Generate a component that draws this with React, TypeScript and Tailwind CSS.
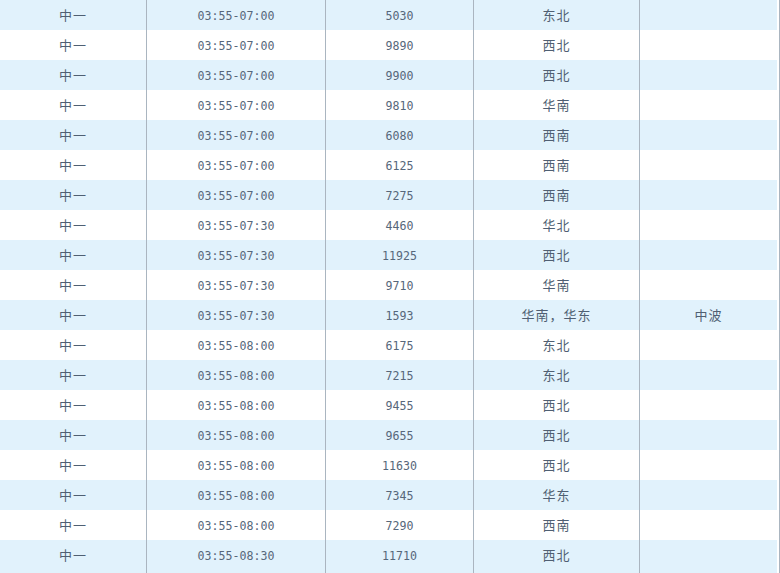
const rows: [string, string, string, string, string][] = [
  ["中一", "03:55-07:00", "5030", "东北", ""],
  ["中一", "03:55-07:00", "9890", "西北", ""],
  ["中一", "03:55-07:00", "9900", "西北", ""],
  ["中一", "03:55-07:00", "9810", "华南", ""],
  ["中一", "03:55-07:00", "6080", "西南", ""],
  ["中一", "03:55-07:00", "6125", "西南", ""],
  ["中一", "03:55-07:00", "7275", "西南", ""],
  ["中一", "03:55-07:30", "4460", "华北", ""],
  ["中一", "03:55-07:30", "11925", "西北", ""],
  ["中一", "03:55-07:30", "9710", "华南", ""],
  ["中一", "03:55-07:30", "1593", "华南，华东", "中波"],
  ["中一", "03:55-08:00", "6175", "东北", ""],
  ["中一", "03:55-08:00", "7215", "东北", ""],
  ["中一", "03:55-08:00", "9455", "西北", ""],
  ["中一", "03:55-08:00", "9655", "西北", ""],
  ["中一", "03:55-08:00", "11630", "西北", ""],
  ["中一", "03:55-08:00", "7345", "华东", ""],
  ["中一", "03:55-08:00", "7290", "西南", ""],
  ["中一", "03:55-08:30", "11710", "西北", ""],
];

// cell text styles
const cjk = "font-['Noto_Sans_CJK_SC',sans-serif] text-[13px] tracking-[1px] leading-[30px] text-center";
const num = "font-['DejaVu_Sans_Mono',monospace] text-[11.6px] leading-[30px] pt-[1px] text-center text-[#56677a]";

export default function App() {
  return (
    <div className="w-[780px] h-[573px] overflow-hidden bg-white text-[#4f5f72]">
      {rows.map((r, i) => {
        const last = i === rows.length - 1;
        const bg = i % 2 === 0 ? "bg-[#e1f2fc]" : "bg-white";
        return (
          <div
            key={i}
            className={`grid grid-cols-[147px_179px_148px_166px_140px] ${last ? "h-[33px]" : "h-[30px]"}`}
          >
            <div className={`${bg} border-r border-[#aab5c0] ${cjk}`}>{r[0]}</div>
            <div className={`${bg} border-r border-[#aab5c0] ${num}`}>{r[1]}</div>
            <div className={`${bg} border-r border-[#aab5c0] ${num}`}>{r[2]}</div>
            <div className={`${bg} border-r border-[#aab5c0] ${cjk}`}>{r[3]}</div>
            <div className="border-r border-[#aab5c0] flex">
              <div className={`${bg} flex-1 mr-[2px] ${cjk}`}>{r[4]}</div>
            </div>
          </div>
        );
      })}
    </div>
  );
}
